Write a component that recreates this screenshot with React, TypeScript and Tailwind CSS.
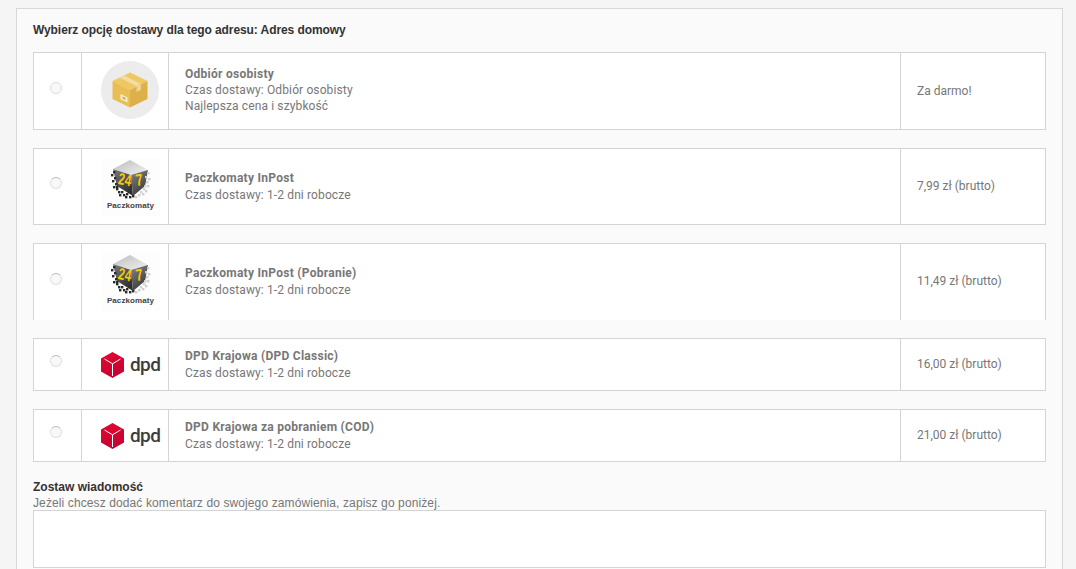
import React from "react";

const Radio = ({ dark }: { dark?: boolean }) => (
  <div className="flex h-full items-center justify-center pr-[3px] pb-[7px]">
    <span
      className={`block h-[12px] w-[12px] rounded-full border bg-[#f8f8f8] ${dark ? "border-[#e0e0e0] border-t-[#b8b8b8]" : "border-[#dcdcdc]"}`}
    />
  </div>
);

const BoxLogo = () => (
  <svg width="58" height="58" viewBox="0 0 58 58" className="block">
    <circle cx="29" cy="29" r="29" fill="#ececec" />
    <polygon points="29,11.5 46.5,20 29,29 11.5,20" fill="#efc862" />
    <polygon points="11.5,20 29,29 29,46.5 11.5,38" fill="#e9bf55" />
    <polygon points="46.5,20 29,29 29,46.5 46.5,38" fill="#deb04a" />
    <polygon points="18.5,16.5 23,14.5 40,23 35.5,25.2" fill="#f3dc9f" />
    <polygon points="35.5,25.2 40,23 40,29 35.5,31" fill="#f0d48c" />
    <polygon points="19.5,33 26.5,36.4 26.5,41.5 19.5,38.2" fill="#f7efd6" />
    <polygon points="21.5,35.6 24.5,37 24.5,39 21.5,37.6" fill="#c9a34a" />
  </svg>
);

const darkChecks = [
  [4, 13], [2, 16], [5, 19], [3, 22], [6, 25], [4, 28], [7, 30], [9, 33], [7, 28], [12, 33], [10, 36], [14, 36], [17, 35], [16, 38], [20, 38], [23, 37],
];
const lightChecks = [
  [38, 14], [36, 18], [39, 20], [37, 23], [35, 27], [38, 27], [34, 30], [36, 32], [31, 33], [29, 36], [33, 35], [26, 38],
];

const PaczkomatyLogo = () => (
  <div className="flex h-[58px] w-[59px] flex-col items-center bg-[#fdfdfd]">
    <svg width="44" height="42" viewBox="0 0 44 42" className="block">
      <defs>
        <linearGradient id="ptop" x1="0" y1="0" x2="1" y2="1">
          <stop offset="0" stopColor="#b8b8b8" />
          <stop offset="0.5" stopColor="#d8d8d8" />
          <stop offset="1" stopColor="#f0f0f0" />
        </linearGradient>
        <linearGradient id="pleft" x1="0" y1="0" x2="0.6" y2="1">
          <stop offset="0" stopColor="#7c7c7c" />
          <stop offset="1" stopColor="#2e2e2e" />
        </linearGradient>
        <linearGradient id="pright" x1="0" y1="0" x2="0.5" y2="1">
          <stop offset="0" stopColor="#858585" />
          <stop offset="1" stopColor="#3a3a3a" />
        </linearGradient>
      </defs>
      <polygon points="21,2 39,12 22,17 4,11" fill="url(#ptop)" />
      <polygon points="4,11 22,17 24,38 8,28" fill="url(#pleft)" />
      <polygon points="22,17 39,12 36,28 24,38" fill="url(#pright)" />
      <text x="8.5" y="26" fontSize="16.5" fontWeight="700" fill="#f6c80f" fontFamily="'Liberation Sans', sans-serif" textLength="13" lengthAdjust="spacingAndGlyphs" transform="rotate(10 8.5 26)">24</text>
      <text x="27.5" y="28" fontSize="16.5" fontWeight="700" fill="#f6c80f" fontFamily="'Liberation Sans', sans-serif" textLength="7" lengthAdjust="spacingAndGlyphs" transform="rotate(-8 27.5 28)">7</text>
      {darkChecks.map(([x, y], i) => (
        <rect key={i} x={x} y={y} width="2.4" height="2.4" fill="#2a2a2a" />
      ))}
      {lightChecks.map(([x, y], i) => (
        <rect key={i} x={x} y={y} width="2.4" height="2.4" fill="#cfcfcf" />
      ))}
    </svg>
    <span className="font-['Liberation_Sans',sans-serif] text-[8px] leading-[12px] font-bold tracking-[0.1px] text-[#444444]">Paczkomaty</span>
  </div>
);

const DpdLogo = () => (
  <div className="flex items-center gap-[6px]">
    <svg width="23" height="26" viewBox="0 0 23 26" className="block">
      <defs>
        <linearGradient id="dred" x1="0" y1="0" x2="0.4" y2="1">
          <stop offset="0" stopColor="#e8062e" />
          <stop offset="1" stopColor="#c20433" />
        </linearGradient>
      </defs>
      <polygon points="11.5,0 23,6.5 23,19.5 11.5,26 0,19.5 0,6.5" fill="url(#dred)" />
      <polyline points="3.5,7 11.5,11.8 19.5,7" fill="none" stroke="#fff" strokeWidth="1" />
      <line x1="11.5" y1="11.8" x2="11.5" y2="24" stroke="#fff" strokeWidth="1" />
    </svg>
    <span className="font-['Roboto',sans-serif] text-[19px] leading-[26px] font-medium tracking-[-0.6px] text-[#3c3c3c]">dpd</span>
  </div>
);

type RowProps = {
  h: string;
  logo: React.ReactNode;
  name: string;
  lines: string[];
  price: string;
  noBottom?: boolean;
  textClass: string;
  logoPad?: string;
  pricePad: string;
  darkRadio?: boolean;
};

const Row = ({ h, logo, name, lines, price, noBottom, textClass, logoPad, pricePad, darkRadio }: RowProps) => (
  <div
    className={`grid w-[1013px] grid-cols-[48px_87px_732px_146px] border-t border-[#d4d4d4] bg-white ${h} ${noBottom ? "" : "border-b"}`}
  >
    <div className="border-l border-[#d4d4d4]">
      <Radio dark={darkRadio} />
    </div>
    <div className={`flex items-center border-l border-[#d4d4d4] pl-[19px] ${logoPad ?? ""}`}>{logo}</div>
    <div className={`flex flex-col justify-center border-l border-[#d4d4d4] pl-[16px] font-['Roboto',sans-serif] text-[12px] tracking-[0.12px] text-[#777777] ${textClass}`}>
      <div className="font-bold tracking-[0.27px]">{name}</div>
      {lines.map((l) => (
        <div key={l}>{l}</div>
      ))}
    </div>
    <div className={`flex items-center border-x border-[#d4d4d4] pl-[16px] font-['Roboto',sans-serif] text-[12px] text-[#777777] ${pricePad}`}>
      {price}
    </div>
  </div>
);

export default function App() {
  return (
    <div className="h-[569px] w-[1076px] overflow-hidden bg-[#f5f5f5] pt-[8px] pl-[16px]">
      <div className="h-[600px] w-[1047px] border border-[#d8d8d8] bg-[#fafafa] pt-[13px] pl-[16px]">
        <h3 className="font-['Liberation_Sans',sans-serif] text-[12px] leading-[16px] font-bold tracking-[-0.08px] text-[#333333]">
          Wybierz opcję dostawy dla tego adresu: Adres domowy
        </h3>
        <div className="mt-[14px] flex flex-col gap-[18px]">
          <Row
            h="h-[78px]"
            logo={<BoxLogo />}
            logoPad="pb-[2px]"
            textClass="leading-[16px] pb-[2px]"
            pricePad="pb-[1px]"
            name="Odbiór osobisty"
            lines={["Czas dostawy: Odbiór osobisty", "Najlepsza cena i szybkość"]}
            price="Za darmo!"
          />
          <Row
            h="h-[77px]"
            darkRadio
            logo={<PaczkomatyLogo />}
            textClass="leading-[17px]"
            pricePad="pb-[1px]"
            name="Paczkomaty InPost"
            lines={["Czas dostawy: 1-2 dni robocze"]}
            price="7,99 zł (brutto)"
          />
          <Row
            h="h-[77px]"
            darkRadio
            noBottom
            logo={<PaczkomatyLogo />}
            logoPad="pb-[1px]"
            textClass="leading-[17px]"
            pricePad="pb-[3px]"
            name="Paczkomaty InPost (Pobranie)"
            lines={["Czas dostawy: 1-2 dni robocze"]}
            price="11,49 zł (brutto)"
          />
          <Row
            h="h-[53px]"
            darkRadio
            logo={<DpdLogo />}
            textClass="leading-[17px]"
            pricePad="pb-[1px]"
            name="DPD Krajowa (DPD Classic)"
            lines={["Czas dostawy: 1-2 dni robocze"]}
            price="16,00 zł (brutto)"
          />
          <Row
            h="h-[53px]"
            darkRadio
            logo={<DpdLogo />}
            textClass="leading-[17px]"
            pricePad="pb-[1px]"
            name="DPD Krajowa za pobraniem (COD)"
            lines={["Czas dostawy: 1-2 dni robocze"]}
            price="21,00 zł (brutto)"
          />
        </div>
        <div className="mt-[18px] font-['Liberation_Sans',sans-serif] text-[12px] leading-[14px] font-bold text-[#333333]">
          Zostaw wiadomość
        </div>
        <div className="mt-[2px] font-['Liberation_Sans',sans-serif] text-[12px] leading-[14px] tracking-[0.11px] text-[#777777]">
          Jeżeli chcesz dodać komentarz do swojego zamówienia, zapisz go poniżej.
        </div>
        <div className="h-[58px] w-[1013px] border border-[#d4d4d4] bg-white" />
      </div>
    </div>
  );
}
